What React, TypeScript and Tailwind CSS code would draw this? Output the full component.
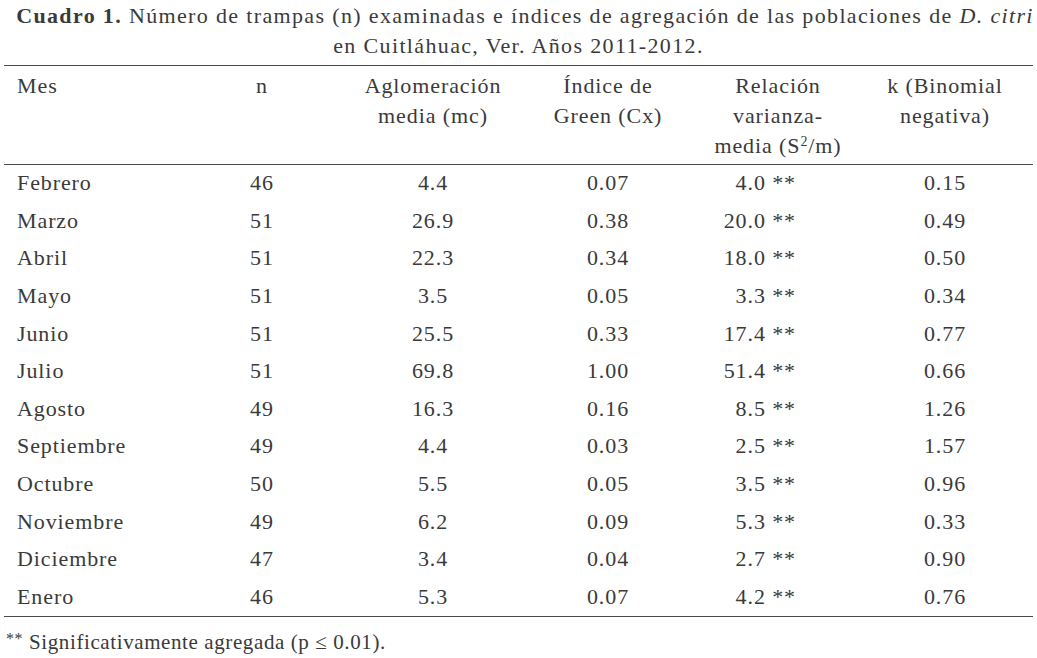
const rows: [string, string, string, string, string, string][] = [
  ['Febrero', '46', '4.4', '0.07', '4.0', '0.15'],
  ['Marzo', '51', '26.9', '0.38', '20.0', '0.49'],
  ['Abril', '51', '22.3', '0.34', '18.0', '0.50'],
  ['Mayo', '51', '3.5', '0.05', '3.3', '0.34'],
  ['Junio', '51', '25.5', '0.33', '17.4', '0.77'],
  ['Julio', '51', '69.8', '1.00', '51.4', '0.66'],
  ['Agosto', '49', '16.3', '0.16', '8.5', '1.26'],
  ['Septiembre', '49', '4.4', '0.03', '2.5', '1.57'],
  ['Octubre', '50', '5.5', '0.05', '3.5', '0.96'],
  ['Noviembre', '49', '6.2', '0.09', '5.3', '0.33'],
  ['Diciembre', '47', '3.4', '0.04', '2.7', '0.90'],
  ['Enero', '46', '5.3', '0.07', '4.2', '0.76'],
];

const cols = 'grid grid-cols-[176px_164px_178px_172px_168px_166px]';

const App = () => {
  return (
    <div className="w-[1037px] h-[658px] bg-white text-[#3a3a3a] font-['Liberation_Serif','Times_New_Roman',serif] text-[22px] tracking-[0.9px] overflow-hidden">
      <div className="pt-[1px] text-center leading-[30px] tracking-[1.35px]">
        <div className="pl-[13px] whitespace-nowrap">
          <b>Cuadro 1.</b> Número de trampas (n) examinadas e índices de agregación de las poblaciones de <i>D. citri</i>
        </div>
        <div>en Cuitláhuac, Ver. Años 2011-2012.</div>
      </div>

      <div className="mx-[4px] mt-[4px] border-t-[1.5px] border-b-[1.5px] border-[#4a4a4a]">
        <div className={`${cols} pt-[5px] pb-[3px] leading-[30px]`}>
          <div className="pl-[13px]">Mes</div>
          <div className="text-center">n</div>
          <div className="text-center">Aglomeración<br />media (mc)</div>
          <div className="text-center">Índice de<br />Green (Cx)</div>
          <div className="text-center">
            Relación<br />varianza-<br />media (S<sup className="text-[14px]">2</sup>/m)
          </div>
          <div className="text-center">k (Binomial<br />negativa)</div>
        </div>
      </div>

      <div className="mx-[4px] border-b-[1.5px] border-[#4a4a4a]">
        {rows.map((r) => (
          <div key={r[0]} className={`${cols} h-[37.6px] pb-[2px] items-center`}>
            <div className="pl-[13px]">{r[0]}</div>
            <div className="text-center">{r[1]}</div>
            <div className="text-center">{r[2]}</div>
            <div className="text-center">{r[3]}</div>
            <div className="text-right pr-[66px]">{r[4]} **</div>
            <div className="text-center">{r[5]}</div>
          </div>
        ))}
      </div>

      <div className="pl-[6px] mt-[10px] text-[21px] tracking-[0.6px]">
        <span className="text-[16px] align-top">**</span> Significativamente agregada (p ≤ 0.01).
      </div>
    </div>
  );
};

export default App;
